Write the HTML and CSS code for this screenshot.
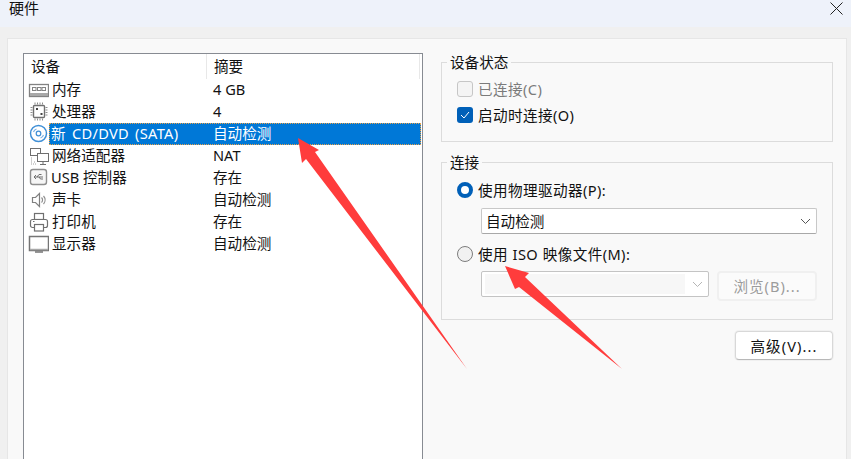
FILE: index.html
```html
<!DOCTYPE html>
<html lang="zh-CN">
<head>
<meta charset="utf-8">
<title>硬件</title>
<link rel="stylesheet" href="styles.css">
</head>
<body>
<div class="window">
  <header class="titlebar">
    <span class="title">硬件</span>
    <svg class="close" width="13" height="13" viewBox="0 0 13 13"><path d="M.5 .5L12.500 12.500M12.500 .5L.5 12.500" stroke="#222" stroke-width="1" fill="none"/></svg>
  </header>
  <main class="panel">
    <section class="list">
      <div class="list-head">
        <div class="head-cell head-device">设备</div>
        <div class="head-cell head-summary">摘要</div>
      </div>
      <div class="row">
        <svg class="icon" viewBox="0 0 21 22"><g fill="none" stroke="#828282"><rect x="1.500" y="5.500" width="19" height="12" stroke-width="1.300"/><rect x="4.500" y="8.500" width="3.500" height="3"/><rect x="9.500" y="8.500" width="3.500" height="3"/><rect x="14" y="8.500" width="3.500" height="3"/></g><path d="M2 14h18v3H2z" fill="#a8a8a8"/></svg>
        <div class="cells"><span class="name">内存</span><span>4 GB</span></div>
      </div>
      <div class="row">
        <svg class="icon" viewBox="0 0 21 22"><rect x="5.500" y="4.500" width="11" height="12" rx="1" fill="#fff" stroke="#707070" stroke-width="1.400"/><path d="M7 1.500v2M9.500 1.500v2M12 1.500v2M14.500 1.500v2M7 17.500v2M9.500 17.500v2M12 17.500v2M14.500 17.500v2M2.500 6.500h2M2.500 9h2M2.500 11.500h2M2.500 14h2M17.500 6.500h2M17.500 9h2M17.500 11.500h2M17.500 14h2" stroke="#8c8c8c" fill="none"/><rect x="8" y="7" width="2" height="2" fill="#444"/><rect x="12.500" y="12" width="2" height="2" fill="#444"/></svg>
        <div class="cells"><span class="name">处理器</span><span>4</span></div>
      </div>
      <div class="row">
        <svg class="icon" viewBox="0 0 21 22"><circle cx="10.500" cy="10.500" r="8" fill="#fff" stroke="#3f8fd6" stroke-width="1.500"/><circle cx="10.500" cy="10.500" r="2.300" fill="none" stroke="#3f8fd6" stroke-width="1.200"/><path d="M5.500 9a5 5 0 0 1 3-3M15.500 12a5 5 0 0 1-3 3" fill="none" stroke="#7db2e4" stroke-width="1.200"/></svg>
        <div class="cells selected"><span class="name name-selected">新 CD/DVD (SATA)</span><span>自动检测</span></div>
      </div>
      <div class="row">
        <svg class="icon" viewBox="0 0 21 22"><rect x="2.500" y="3.500" width="10" height="7" fill="#fff" stroke="#6f6f6f"/><rect x="9.500" y="8.500" width="11" height="8" fill="#fff" stroke="#6f6f6f"/><path d="M15 17v2M12 19.500h6" stroke="#6f6f6f" fill="none"/><path d="M3 13h1M3 15h1M3 17h1M6 17h1M3 19h6" stroke="#a0a0a0" stroke-dasharray="1 1" fill="none"/></svg>
        <div class="cells"><span class="name">网络适配器</span><span>NAT</span></div>
      </div>
      <div class="row">
        <svg class="icon" viewBox="0 0 21 22"><rect x="2.500" y="2.500" width="16" height="15" rx="2.500" fill="#f6f6f6" stroke="#8f8f8f" stroke-width="1.400"/><path d="M6 10h9M6 10l2-2M6 10l2 2M9 10l2-2.500h2.500M11 10l1.500 2h2.500" fill="none" stroke="#6f6f6f"/></svg>
        <div class="cells"><span class="name name-usb">USB 控制器</span><span>存在</span></div>
      </div>
      <div class="row">
        <svg class="icon" viewBox="0 0 21 22"><path d="M4.500 8.500h3l4-4v13l-4-4h-3z" fill="#fff" stroke="#808080" stroke-width="1.200"/><path d="M13.500 8.500a3.500 3.500 0 0 1 0 5M15.500 7a6 6 0 0 1 0 8" fill="none" stroke="#8c8c8c" stroke-width="1.200"/></svg>
        <div class="cells"><span class="name">声卡</span><span>自动检测</span></div>
      </div>
      <div class="row">
        <svg class="icon" viewBox="0 0 21 22"><rect x="6.500" y="2.500" width="9" height="6" fill="#fff" stroke="#707070" stroke-width="1.200"/><rect x="2.500" y="8.500" width="17" height="8" rx="2" fill="#fff" stroke="#707070" stroke-width="1.200"/><rect x="6.500" y="13.500" width="9" height="6.500" fill="#fff" stroke="#707070" stroke-width="1.200"/><path d="M5 10.500h1.500" stroke="#707070"/></svg>
        <div class="cells"><span class="name">打印机</span><span>存在</span></div>
      </div>
      <div class="row">
        <svg class="icon" viewBox="0 0 21 22"><rect x="1.500" y="3.500" width="19" height="14" fill="#fff" stroke="#757575" stroke-width="1.500"/><path d="M2 16.500h18" stroke="#a8a8a8" stroke-width="1.500"/><path d="M7 19h8" stroke="#757575" stroke-width="1.500"/></svg>
        <div class="cells"><span class="name">显示器</span><span>自动检测</span></div>
      </div>
    </section>
    <aside class="side">
      <fieldset class="group group-status">
        <legend>设备状态</legend>
        <div class="opt opt-disabled"><span class="box box-off"></span><span>已连接(C)</span></div>
        <div class="opt opt-second"><span class="box box-on"><svg width="10" height="8" viewBox="0 0 10 8"><path d="M1 4l3 3 5-6" fill="none" stroke="#fff" stroke-width="1"/></svg></span><span>启动时连接(O)</span></div>
      </fieldset>
      <fieldset class="group group-conn">
        <legend>连接</legend>
        <div class="opt"><span class="radio radio-on"></span><span>使用物理驱动器(P):</span></div>
        <div class="select select-on"><span>自动检测</span><svg width="11" height="7" viewBox="0 0 11 7"><path d="M1 1l4.500 4.500L10 1" fill="none" stroke="#555"/></svg></div>
        <div class="opt opt-iso"><span class="radio radio-off"></span><span>使用 ISO 映像文件(M):</span></div>
        <div class="iso-row">
          <div class="select select-off"><span class="select-fill"></span><svg width="11" height="7" viewBox="0 0 11 7"><path d="M1 1l4.500 4.500L10 1" fill="none" stroke="#b5b5b5"/></svg></div>
          <button class="btn btn-disabled" type="button">浏览(B)...</button>
        </div>
      </fieldset>
      <div class="actions"><button class="btn btn-adv" type="button">高级(V)...</button></div>
    </aside>
  </main>
  <svg class="arrows" width="851" height="459" viewBox="0 0 851 459">
    <polygon points="298,138 319,150 315,152 467,369 306,159 302,163" fill="#ff3c3c"/>
    <polygon points="505,266 529,273 525,277 622,369 519,287 515,289" fill="#ff3c3c"/>
  </svg>
</div>
</body>
</html>
```
FILE: styles.css
```css
* { box-sizing: border-box; }
html, body { margin: 0; padding: 0; }
body {
  font-family: "Noto Sans", "Noto Sans CJK SC", sans-serif;
  font-size: 14.6px;
  line-height: 22px;
  color: #111;
  background: #f0f0f0;
}
.window {
  position: relative;
  width: 851px;
  height: 459px;
  overflow: hidden;
  background: #f0f0f0;
  display: flex;
  flex-direction: column;
}
.titlebar {
  height: 27px;
  flex: none;
  background: #eef2fa;
  display: flex;
  justify-content: space-between;
  align-items: flex-start;
  padding: 0 8px 0 9px;
}
.title { line-height: 16px; font-size: 15px; height: 16px; }
.close { margin-top: 2px; }
.panel {
  flex: 1;
  margin: 11px 4px 0 7px;
  background: #f9f9f9;
  border: 1px solid #e6e6e6;
  border-bottom: 0;
  padding: 14px 0 0 15px;
  display: flex;
  min-height: 0;
}
.list {
  width: 400px;
  height: 420px;
  flex: none;
  background: #fff;
  border: 1px solid #878b92;
  border-bottom: 0;
}
.list-head { display: flex; height: 25px; padding-right: 2px; }
.head-cell { line-height: 25px; border-right: 1px solid #e8e8e8; }
.head-device { width: 183px; padding-left: 7px; }
.head-summary { flex: 1; padding-left: 7px; }
.row { display: flex; height: 22px; padding: 0 1px 0 4px; }
.icon { width: 21px; height: 22px; flex: none; }
.cells { flex: 1; display: flex; line-height: 21px; }
.name { width: 164px; padding-left: 3px; flex: none; }
.name-selected { padding-left: 2px; word-spacing: 2px; letter-spacing: 0.3px; }
.name-usb { padding-left: 2px; }
.selected {
  background: #0078d7;
  color: #fff;
  outline: 1px dotted #e8a24a;
  outline-offset: -1px;
}
.side { width: 392px; margin-left: 18px; flex: none; display: flex; flex-direction: column; }
.group {
  margin: 0;
  border: 1px solid #dcdcdc;
  padding: 7px 15px 0;
  min-width: 0;
}
.group legend { padding: 0 3px; margin-left: -10px; line-height: 20px; font-size: 14.6px; }
.group-status { height: 90px; margin-top: -1px; }
.group-conn { height: 168px; margin-top: 10px; }
.opt { display: flex; align-items: center; height: 22px; gap: 5px; letter-spacing: 0.4px; word-spacing: 0.4px; }
.opt-second { margin-top: 4px; }
.opt-disabled { color: #7b7b7b; }
.group-status .opt-disabled { margin-top: -1px; }
.box { width: 16px; height: 16px; border-radius: 3px; flex: none; display: flex; align-items: center; justify-content: center; }
.box-off { background: #f4f4f4; border: 1px solid #c6c6c6; }
.box-on { background: #0060b8; }
.radio { width: 16px; height: 16px; border-radius: 50%; flex: none; }
.radio-on { background: #fff; border: 4px solid #0060b8; }
.radio-off { background: #f1f1f1; border: 1px solid #7d7d7d; }
.select {
  display: flex;
  align-items: center;
  justify-content: space-between;
  height: 26px;
  border: 1px solid #c8c8c8;
  border-bottom-color: #a8a8a8;
  border-radius: 2px;
  background: #fff;
  padding: 0 4px 0 4px;
}
.select-on { width: 336px; margin: 7px 0 0 24px; }
.select-on svg { margin-right: 1px; }
.opt-iso { margin-top: 9px; }
.iso-row { display: flex; align-items: flex-start; margin: 6px 0 0 24px; }
.select-off { width: 228px; border-color: #c4c4c4; background: #fff; padding: 2px 5px 2px 3px; }
.select-fill { width: 200px; height: 20px; background: #f7f7f7; }
.btn {
  font: inherit;
  color: #111;
  background: #fff;
  border: 1px solid #d8d8d8;
  border-bottom-color: #b8b8b8;
  border-radius: 4px;
  padding: 0;
  line-height: 20px;
}
.btn-disabled {
  width: 100px;
  height: 30px;
  margin-left: 8px;
  color: #9c9c9c;
  background: #fbfbfb;
  border: 2px solid #f0f0f0;
  letter-spacing: 1px;
}
.actions { display: flex; justify-content: flex-end; margin-top: 11px; }
.btn-adv { width: 98px; height: 29px; box-shadow: 0 0 0 1px #f0f0f0; letter-spacing: 1.1px; }
.arrows { position: absolute; left: 0; top: 0; pointer-events: none; }
```
